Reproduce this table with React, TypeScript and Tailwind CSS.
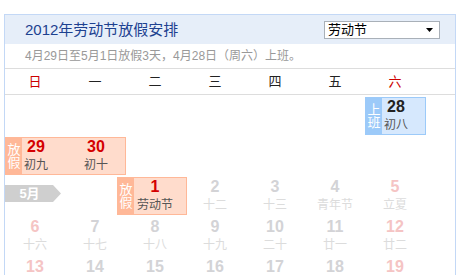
import React from "react";

type Cell = { d: number; l: string; weekend?: boolean };

const FONT = { fontFamily: '"Liberation Sans", "Noto Sans CJK SC", sans-serif' };

const WEEK = ["日", "一", "二", "三", "四", "五", "六"];

function DayText({
  c,
  numCls,
  lunarCls,
}: {
  c: Cell;
  numCls: string;
  lunarCls: string;
}) {
  return (
    <div className="flex w-[60px] flex-col items-center">
      <span className={`text-[16px] font-bold leading-[18px] ${numCls}`}>{c.d}</span>
      <span className={`whitespace-nowrap text-[12px] leading-[18px] ${lunarCls}`}>{c.l}</span>
    </div>
  );
}

function PlainDay({ c }: { c: Cell }) {
  return (
    <div className="pt-[3px]">
      <DayText
        c={c}
        numCls={c.weekend ? "text-[#f5c4c4]" : "text-[#d3d3d6]"}
        lunarCls="text-[#dcdcdc]"
      />
    </div>
  );
}

function Strip({ text, cls }: { text: string; cls: string }) {
  return (
    <div
      className={`absolute inset-y-0 left-0 flex w-4 flex-col items-center justify-center text-[13px] leading-[13px] text-white ${cls}`}
    >
      {text.split("").map((ch, i) => (
        <span key={i}>{ch}</span>
      ))}
    </div>
  );
}

export default function App() {
  const row3: Cell[] = [
    { d: 2, l: "十二" },
    { d: 3, l: "十三" },
    { d: 4, l: "青年节" },
    { d: 5, l: "立夏", weekend: true },
  ];
  const row4: Cell[] = [
    { d: 6, l: "十六", weekend: true },
    { d: 7, l: "十七" },
    { d: 8, l: "十八" },
    { d: 9, l: "十九" },
    { d: 10, l: "二十" },
    { d: 11, l: "廿一" },
    { d: 12, l: "廿二", weekend: true },
  ];
  const row5: Cell[] = [
    { d: 13, l: "廿三", weekend: true },
    { d: 14, l: "廿四" },
    { d: 15, l: "廿五" },
    { d: 16, l: "廿六" },
    { d: 17, l: "廿七" },
    { d: 18, l: "廿八" },
    { d: 19, l: "廿九", weekend: true },
  ];

  return (
    <div className="h-[275px] w-[460px] overflow-hidden bg-white pl-1 pt-[14px]" style={FONT}>
      <div className="w-[452px] border-x border-t border-[#c3d8f6]">
        {/* header */}
        <div className="flex h-[29px] items-center justify-between bg-[#e6eef9] pl-5 pr-[15px]">
          <span className="text-[15px] leading-none text-[#1d4190]">2012年劳动节放假安排</span>
          <div className="flex h-[18px] w-[116px] items-center justify-between border border-[#a9b0b8] bg-white pl-[3px] pr-[6px] text-[13px] leading-none text-black">
            <span>劳动节</span>
            <svg width="7" height="4" viewBox="0 0 7 4">
              <path d="M0 0h7L3.5 4z" fill="#000" />
            </svg>
          </div>
        </div>
        {/* note */}
        <div className="flex h-[25px] items-center border-b border-[#dddddd] pl-5 text-[12px] text-[#999999]">
          4月29日至5月1日放假3天，4月28日（周六）上班。
        </div>
        {/* week header */}
        <div className="grid h-[26px] grid-cols-[repeat(7,60px)] items-center border-b border-[#dddddd] text-[13px]">
          {WEEK.map((w, i) => (
            <span
              key={w}
              className={`text-center ${i === 0 || i === 6 ? "text-[#cc0000]" : "text-[#222222]"}`}
            >
              {w}
            </span>
          ))}
        </div>

        {/* row 1 */}
        <div className="grid h-10 grid-cols-[repeat(7,60px)]">
          <div className="col-start-7 pt-0.5">
            <div className="relative flex h-[38px] w-[61px] border border-[#9ccaf9] bg-[#d6e8fd]">
              <Strip text="上班" cls="bg-[#9ccaf9]" />
              <div className="relative">
                <DayText c={{ d: 28, l: "初八" }} numCls="text-[#222222]" lunarCls="text-[#555555]" />
              </div>
            </div>
          </div>
        </div>

        {/* row 2 */}
        <div className="grid h-10 grid-cols-[repeat(7,60px)]">
          <div className="col-span-2 col-start-1 pt-0.5">
            <div className="relative flex h-[38px] w-[121px] border border-[#ffb898] bg-[#ffdccc]">
              <Strip text="放假" cls="bg-[#ffb898]" />
              <div className="relative flex">
                <DayText c={{ d: 29, l: "初九" }} numCls="text-[#d40000]" lunarCls="text-[#555555]" />
                <DayText c={{ d: 30, l: "初十" }} numCls="text-[#d40000]" lunarCls="text-[#555555]" />
              </div>
            </div>
          </div>
        </div>

        {/* row 3 */}
        <div className="grid h-10 grid-cols-[repeat(7,60px)]">
          <div className="col-span-2 col-start-1 pt-[10px]">
            <div className="flex h-[17px] w-[56px] items-center justify-center pr-[8px] pl-[1px] text-[13px] font-bold leading-none text-white [clip-path:polygon(0_0,48px_0,100%_50%,48px_100%,0_100%)] bg-[#cfcfcf]">
              5月
            </div>
          </div>
          <div className="col-start-3 pt-0.5">
            <div className="relative -ml-2 flex h-[38px] w-[70px] border border-[#ffb898] bg-[#ffdccc] pl-[7px]">
              <Strip text="放假" cls="bg-[#ffb898]" />
              <div className="relative">
                <DayText c={{ d: 1, l: "劳动节" }} numCls="text-[#d40000]" lunarCls="text-[#555555]" />
              </div>
            </div>
          </div>
          {row3.map((c) => (
            <PlainDay key={c.d} c={c} />
          ))}
        </div>

        {/* row 4 */}
        <div className="grid h-10 grid-cols-[repeat(7,60px)]">
          {row4.map((c) => (
            <PlainDay key={c.d} c={c} />
          ))}
        </div>

        {/* row 5 */}
        <div className="grid h-10 grid-cols-[repeat(7,60px)]">
          {row5.map((c) => (
            <PlainDay key={c.d} c={c} />
          ))}
        </div>
      </div>
    </div>
  );
}
